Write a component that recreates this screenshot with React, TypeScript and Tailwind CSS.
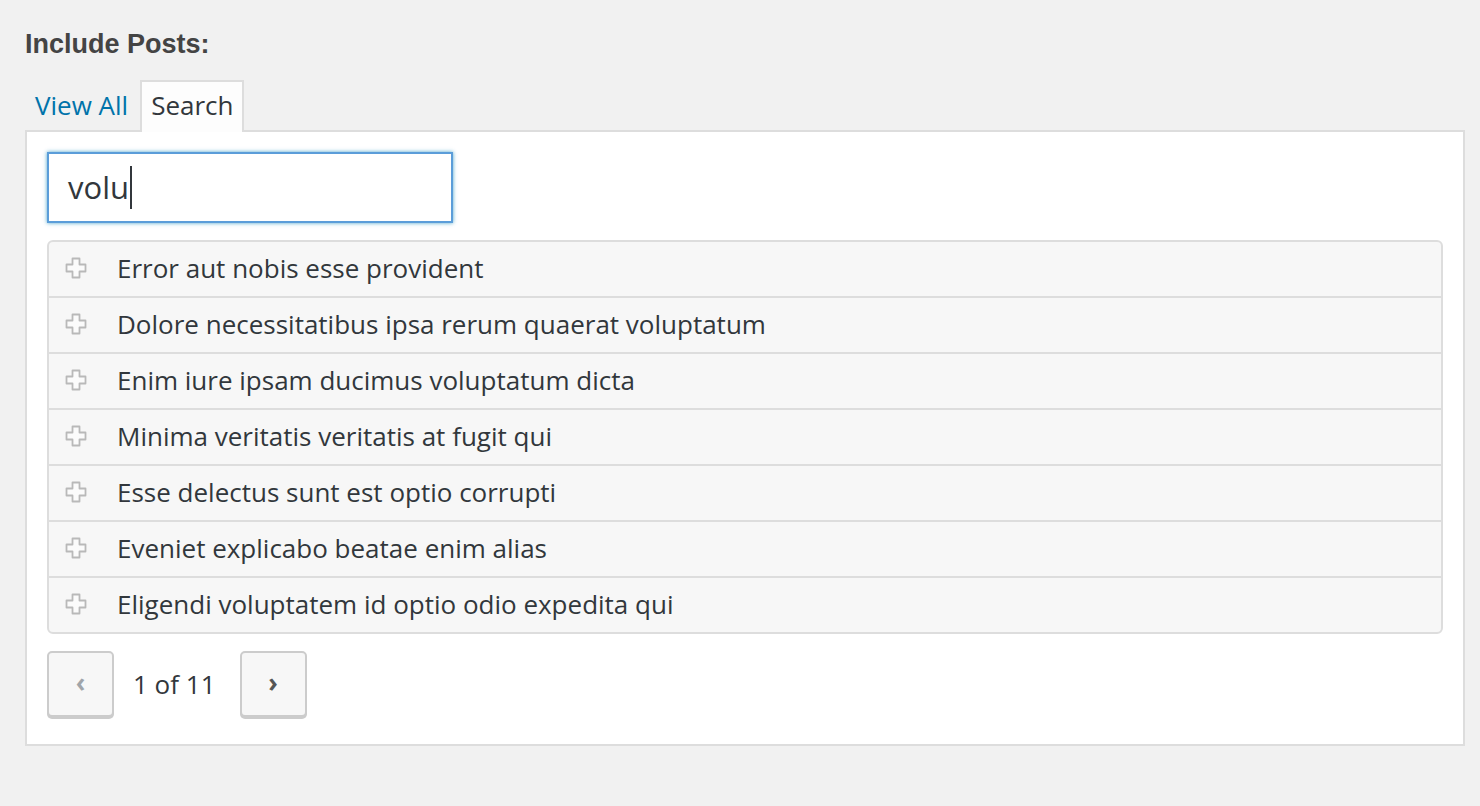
const posts = [
  'Error aut nobis esse provident',
  'Dolore necessitatibus ipsa rerum quaerat voluptatum',
  'Enim iure ipsam ducimus voluptatum dicta',
  'Minima veritatis veritatis at fugit qui',
  'Esse delectus sunt est optio corrupti',
  'Eveniet explicabo beatae enim alias',
  'Eligendi voluptatem id optio odio expedita qui',
]

function PlusIcon() {
  return (
    <svg width="22" height="22" viewBox="0 0 22 22" className="shrink-0">
      <path
        d="M7.5 1.5h7v6h6v7h-6v6h-7v-6h-6v-7h6z"
        fill="#fbfbfb"
        stroke="#b9b9b9"
        strokeWidth={1.8}
        strokeLinejoin="round"
      />
    </svg>
  )
}

export default function App() {
  return (
    <div className="min-h-screen w-full bg-[#f1f1f1] pl-[25px] pr-[15px] pt-[29px] font-['Open_Sans',sans-serif] text-[#32373c]">
      <h3 className="font-['Liberation_Sans',Arial,sans-serif] text-[27px] font-bold leading-[30px] text-[#444]">
        Include Posts:
      </h3>

      <div className="mt-[21px] flex items-end">
        <a className="px-[10px] pb-[7px] text-[26px] leading-[36px] text-[#0073aa]" href="#">
          View All
        </a>
        <div className="relative z-10 -mb-[2px] ml-[2px] border-2 border-b-0 border-[#dddddd] bg-[#fdfdfd] px-[9px] pt-[5px] pb-[9px] text-[26px] leading-[36px] text-[#32373c]">
          Search
        </div>
      </div>

      <div className="border-2 border-[#dddddd] bg-white px-[20px] pt-[20px] pb-[27px]">
        <div className="flex h-[71px] w-[406px] items-center border-2 border-[#5b9dd9] px-[19px] shadow-[0_0_4px_rgba(30,140,190,0.8)]">
          <span className="text-[31px] leading-none text-[#32373c]">volu</span>
          <span className="ml-[1px] h-[43px] w-[2px] bg-[#32373c]" />
        </div>

        <ul className="mt-[17px] overflow-hidden rounded-[6px] border-2 border-[#dddddd] bg-[#f7f7f7]">
          {posts.map((title, i) => (
            <li
              key={title}
              className={`flex items-center gap-[30px] pb-[3px] pl-[16px] text-[26px] leading-none ${
                i > 0 ? 'h-[56px] border-t-2 border-[#dddddd]' : 'h-[54px]'
              }`}
            >
              <PlusIcon />
              <span>{title}</span>
            </li>
          ))}
        </ul>

        <div className="mt-[17px] flex items-center">
          <button className="flex h-[66px] w-[67px] items-center justify-center rounded-[5px] border-2 border-[#cccccc] bg-[#f7f7f7] pb-[4px] text-[26px] font-bold text-[#a0a5aa] shadow-[0_2px_0_#cccccc]">
            ‹
          </button>
          <span className="ml-[19px] mr-[24px] text-[26px] text-[#32373c]">1 of 11</span>
          <button className="flex h-[66px] w-[67px] items-center justify-center rounded-[5px] border-2 border-[#cccccc] bg-[#f7f7f7] pb-[4px] text-[26px] font-bold text-[#555555] shadow-[0_2px_0_#cccccc]">
            ›
          </button>
        </div>
      </div>
    </div>
  )
}
